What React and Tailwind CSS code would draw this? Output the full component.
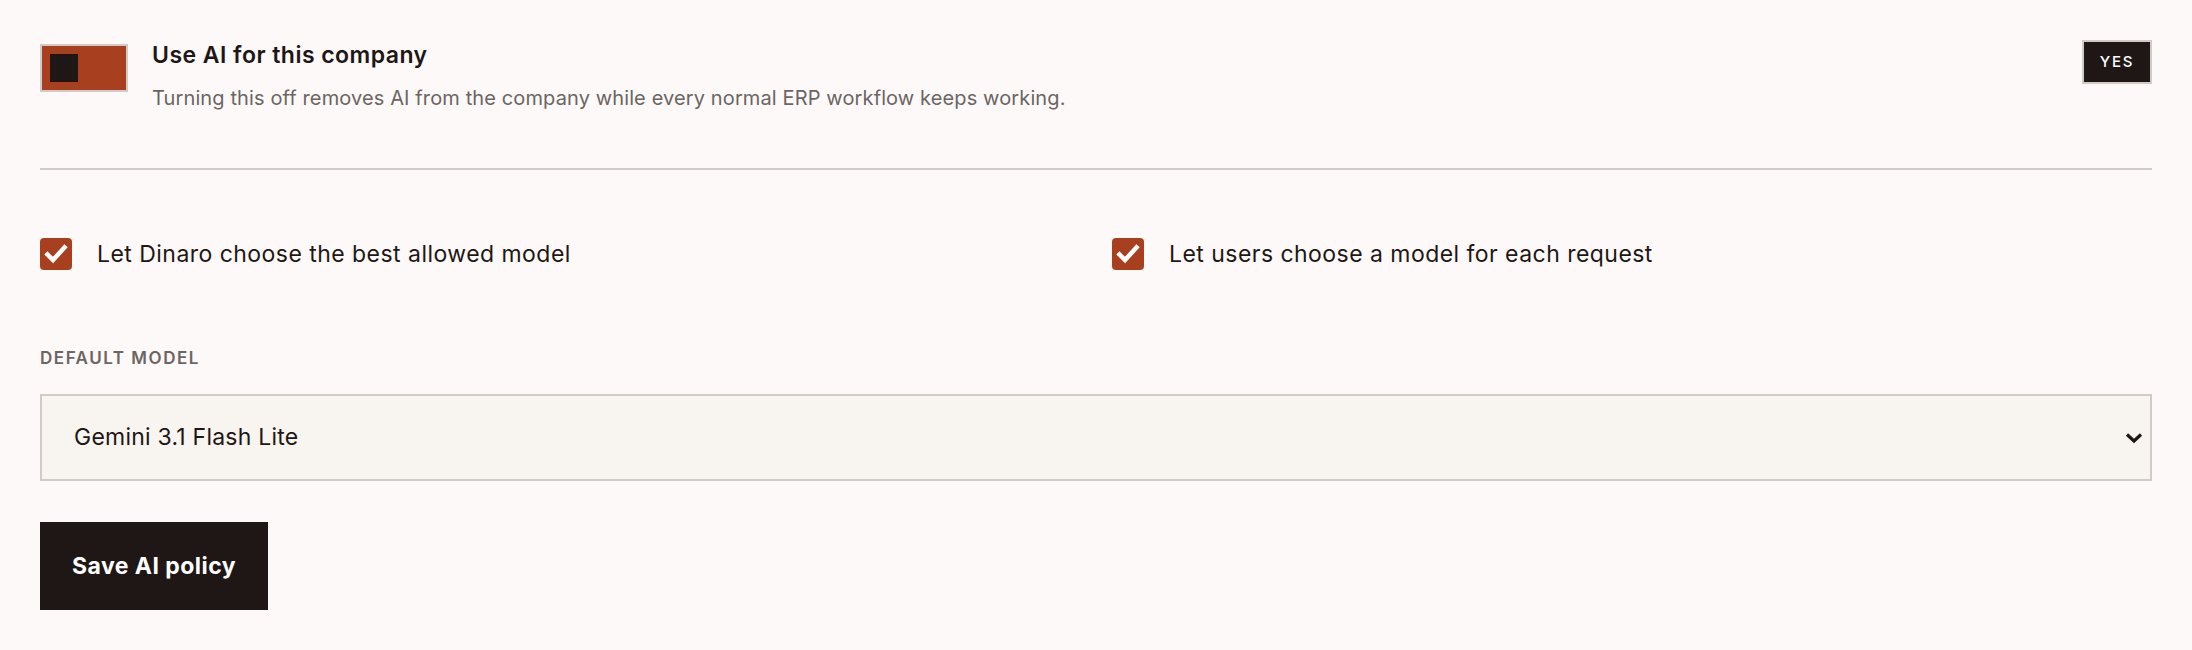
import React from "react";

function CheckIcon() {
  return (
    <svg viewBox="0 0 32 32" className="h-8 w-8">
      <rect x="0" y="0" width="32" height="32" rx="4" fill="#a8401f" />
      <polyline
        points="7.5,16.5 13,22 24.5,9.5"
        fill="none"
        stroke="#ffffff"
        strokeWidth="4.5"
        strokeLinecap="square"
        strokeLinejoin="miter"
      />
    </svg>
  );
}

function CheckOption({ label }) {
  return (
    <label className="flex h-8 items-center gap-[25px]">
      <CheckIcon />
      <span className="text-[23px] leading-8 tracking-[0.02em] text-[#1e1715]">{label}</span>
    </label>
  );
}

export default function App() {
  return (
    <div className="min-h-screen bg-[#fdf9f8] px-10 pt-10 pb-10 font-['Inter',sans-serif] text-[#1e1715]">
      {/* AI master switch */}
      <div className="flex items-start gap-6">
        <div className="mt-1 flex h-12 w-[88px] shrink-0 items-center border-2 border-[#d2cac7] bg-[#a8401f] p-2">
          <span className="h-7 w-7 bg-[#1e1715]" />
        </div>
        <div className="flex-1">
          <h2 className="text-[23px] font-semibold leading-[30px] tracking-[0.02em]">Use AI for this company</h2>
          <p className="mt-[14px] text-[20px] leading-[28px] tracking-[0.006em] text-[#6b6563]">
            Turning this off removes AI from the company while every normal ERP workflow keeps working.
          </p>
        </div>
        <span className="inline-flex h-11 w-[70px] shrink-0 items-center justify-center border-2 border-[#d2cac7] bg-[#1e1715] text-[15px] font-medium tracking-[0.12em] text-white">
          YES
        </span>
      </div>

      <div className="mt-[56px] h-0.5 bg-[#d2cac7]" />

      {/* Model selection options */}
      <div className="mt-[68px] grid grid-cols-2 gap-8">
        <CheckOption label="Let Dinaro choose the best allowed model" />
        <CheckOption label="Let users choose a model for each request" />
      </div>

      <div className="mt-[76px] text-[17px] font-semibold uppercase leading-6 tracking-[0.09em] text-[#6b6563]">
        Default model
      </div>

      <div className="mt-6 flex h-[87px] items-center justify-between border-2 border-[#d2cac7] bg-[#f8f4ef] pl-8 pr-[7px]">
        <span className="text-[23px] tracking-[0.01em] text-[#1e1715]">Gemini 3.1 Flash Lite</span>
        <svg viewBox="0 0 18 12" className="h-3 w-[18px]" fill="none">
          <polyline points="2,2.5 9,9 16,2.5" stroke="#1e1715" strokeWidth="3.2" />
        </svg>
      </div>

      <button className="mt-[41px] h-[88px] bg-[#1e1715] px-8 text-[23px] font-bold tracking-[0.02em] text-white">
        Save AI policy
      </button>
    </div>
  );
}
